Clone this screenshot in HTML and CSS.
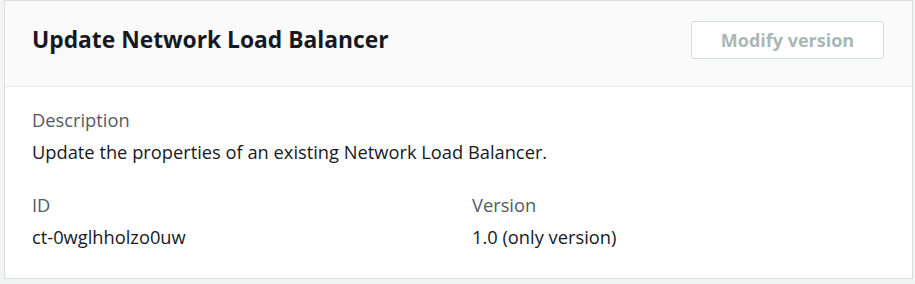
FILE: index.html
```html
<!DOCTYPE html>
<html lang="en">
<head>
    <meta charset="UTF-8">
    <title>Update Network Load Balancer</title>
    <link rel="stylesheet" href="styles.css">
</head>
<body>
    <div class="panel">
        <div class="panel-header">
            <h2>Update Network Load Balancer</h2>
            <button type="button" class="btn" disabled>Modify version</button>
        </div>
        <div class="panel-body">
            <div class="field">
                <div class="label">Description</div>
                <div class="value">Update the properties of an existing Network Load Balancer.</div>
            </div>
            <div class="columns">
                <div class="field">
                    <div class="label">ID</div>
                    <div class="value">ct-0wglhholzo0uw</div>
                </div>
                <div class="field">
                    <div class="label">Version</div>
                    <div class="value">1.0 (only version)</div>
                </div>
            </div>
        </div>
    </div>
</body>
</html>
```

FILE: styles.css
```css
body {
    font-family: "Open Sans", "Noto Sans", sans-serif;
    background-color: #f2f3f3;
    color: #16191f;
    margin: 0;
    padding: 0 2px 0 4px;
}

.panel {
    background-color: #ffffff;
    border: 1px solid #dadede;
}

.panel-header {
    display: flex;
    align-items: center;
    justify-content: space-between;
    background-color: #fafafa;
    border-bottom: 1px solid #eaeded;
    height: 78px;
    padding: 0 28px 7px 27px;
}

.panel-header h2 {
    margin: 0;
    font-size: 22.8px;
    font-weight: 700;
    line-height: 30px;
}

.btn {
    font-family: inherit;
    font-size: 18px;
    font-weight: 700;
    color: #aab7b8;
    background-color: #ffffff;
    border: 1px solid #d5dbdb;
    border-radius: 3px;
    width: 193px;
    height: 38px;
    padding: 0;
}

.panel-body {
    padding: 19px 28px 27px 27px;
    font-size: 18.3px;
}

.field {
    margin-bottom: 25px;
}

.columns .field {
    margin-bottom: 0;
}

.label {
    color: #545b64;
    line-height: 28px;
    margin-bottom: 4px;
}

.value {
    line-height: 28px;
}

.columns {
    display: grid;
    grid-template-columns: 1fr 1fr;
    column-gap: 28px;
}
```
